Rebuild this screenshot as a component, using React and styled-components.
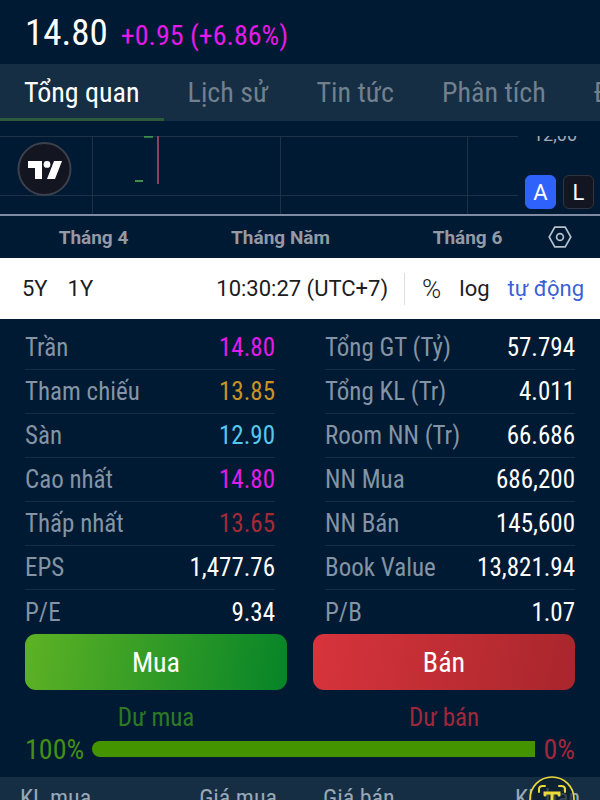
import React from 'react';
import styled, {createGlobalStyle} from 'styled-components';

const GlobalStyle = createGlobalStyle`
  * {
    box-sizing: border-box;
  }
  body {
    margin: 0;
    background-color: #001a33;
    font-family: 'Roboto Condensed', 'Liberation Sans Narrow', Roboto, sans-serif;
    overflow: hidden;
  }
  button {
    font-family: inherit;
    border: none;
    background: none;
    padding: 0;
    cursor: pointer;
  }
`;

const Page = styled.main`
  width: 100%;
  height: 100vh;
  overflow: hidden;
  color: #ffffff;
`;

const PriceHeader = styled.header`
  display: flex;
  align-items: baseline;
  gap: 13px;
  height: 64px;
  padding: 11px 25px 0;
  line-height: 44px;
  white-space: nowrap;
`;

const Price = styled.span`
  font-size: 37px;
`;

const Change = styled.span`
  font-size: 28px;
  color: #e31be8;
`;

const Tabs = styled.nav`
  display: flex;
  height: 57px;
  overflow: hidden;
  background-color: #152e44;
`;

const Tab = styled.button`
  flex: none;
  padding: 3px 24px 0;
  font-size: 28px;
  line-height: 50px;
  white-space: nowrap;
  color: ${props => props.$active ? '#ffffff' : '#72808d'};
  border-bottom: 3px solid ${props => props.$active ? '#2c5a3c' : 'transparent'};
`;

const Chart = styled.section`
  position: relative;
  display: grid;
  grid-template-columns: 1fr 82px;
  height: 95px;
  padding-top: 15px;
  border-bottom: 2px solid #7e8ba3;
`;

const Plot = styled.svg`
  display: block;
  width: 100%;
  height: 78px;
`;

const PriceAxis = styled.div`
  display: flex;
  flex-direction: column;
  justify-content: space-between;
  height: 78px;
  padding: 0 6px 5px 7px;
  overflow: hidden;
  font-family: Roboto, sans-serif;
`;

const AxisPrice = styled.span`
  height: 8px;
  padding-left: 8px;
  display: flex;
  align-items: flex-end;
  font-size: 18px;
  line-height: 18px;
  color: #a5abb5;
`;

const ScaleButtons = styled.div`
  display: flex;
  justify-content: space-between;
`;

const ScaleButton = styled.button`
  width: 31px;
  height: 34px;
  border: 1px solid ${props => props.$active ? '#2f62fb' : '#32353f'};
  border-radius: 6px;
  background-color: ${props => props.$active ? '#2f62fb' : '#131520'};
  color: #ffffff;
  font-size: 22px;
`;

const LogoBadge = styled.svg`
  position: absolute;
  left: 17px;
  top: 21px;
  width: 55px;
  height: 55px;
`;

const TimeAxis = styled.div`
  display: grid;
  grid-template-columns: repeat(3, 1fr) 39px;
  align-items: center;
  height: 42px;
  font-family: Roboto, sans-serif;
  font-size: 19px;
  font-weight: 700;
  color: #9499a3;
  text-align: center;
`;

const SettingsButton = styled.button`
  display: flex;
  justify-self: end;
  margin-right: 28px;
`;

const Toolbar = styled.div`
  display: flex;
  align-items: center;
  height: 61px;
  padding: 0 16px 0 22px;
  background-color: #ffffff;
  white-space: nowrap;
`;

const ToolButton = styled.button`
  font-family: Roboto, sans-serif;
  font-size: ${props => props.$symbol ? '26px' : '22px'};
  font-weight: ${props => props.$symbol ? 300 : 400};
  line-height: 32px;
  color: ${props => props.$active ? '#3c5fd6' : '#1c1c1e'};
`;

const Ranges = styled.div`
  display: flex;
  flex: 1;
  gap: 20px;
`;

const ScaleTools = styled.div`
  display: flex;
  align-items: center;
  gap: 18px;
  margin-left: 16px;
  padding-left: 17px;
  border-left: 1px solid #dcdee3;
`;

const Stats = styled.section`
  display: grid;
  grid-template-columns: 1fr 1fr;
  gap: 50px;
  padding: 7px 25px 0;
`;

const StatList = styled.dl`
  margin: 0;
`;

const StatRow = styled.div`
  display: flex;
  align-items: center;
  justify-content: space-between;
  height: 44px;
  font-size: 25px;
  border-bottom: 1px solid #122d45;
  &:last-child{
    border-bottom: none;
  }
`;

const StatLabel = styled.dt`
  color: #8494a5;
`;

const StatValue = styled.dd`
  margin: 0;
  color: ${props => props.$color || '#ffffff'};
`;

const Orders = styled.section`
  display: grid;
  grid-template-columns: 1fr 1fr;
  column-gap: 26px;
  padding: 0 25px;
`;

const OrderButton = styled.button`
  height: 56px;
  border-radius: 11px;
  font-size: 28px;
  color: #ffffff;
  background: ${props => props.$sell
    ? 'linear-gradient(100deg, #d8343c, #a8262c)'
    : 'linear-gradient(100deg, #5eb224, #068428)'};
`;

const OrderCaption = styled.p`
  margin: 13px 0 0;
  font-size: 25px;
  line-height: 30px;
  text-align: center;
  color: ${props => props.$sell ? '#a0283c' : '#2c7a22'};
`;

const Balance = styled.div`
  display: flex;
  align-items: center;
  gap: 8px;
  height: 32px;
  padding: 0 25px;
  font-size: 28px;
`;

const Percent = styled.span`
  color: ${props => props.$sell ? '#a0283c' : '#448f14'};
`;

const BalanceBar = styled.div`
  flex: 1;
  height: 16px;
  border-radius: 8px 0 0 8px;
  background-color: #449400;
`;

const OrderBook = styled.table`
  width: 100%;
  height: 42px;
  margin-top: 12px;
  border-spacing: 0;
  table-layout: fixed;
  background-color: #152e44;
`;

const BookHead = styled.th`
  padding: ${props => props.$inner ? '0 23px' : '0 20px'};
  font-size: 24px;
  font-weight: 400;
  text-align: ${props => props.$right ? 'right' : 'left'};
  color: #9aa7b4;
`;

const ScanButton = styled.button`
  position: absolute;
  right: 24px;
  top: 775px;
  width: 48px;
  height: 48px;
`;

const tabs = ['Tổng quan', 'Lịch sử', 'Tin tức', 'Phân tích', 'Định giá'];

const priceStats = [
  {label: 'Trần', value: '14.80', color: '#e31be8'},
  {label: 'Tham chiếu', value: '13.85', color: '#c99324'},
  {label: 'Sàn', value: '12.90', color: '#56c8ee'},
  {label: 'Cao nhất', value: '14.80', color: '#e31be8'},
  {label: 'Thấp nhất', value: '13.65', color: '#a52a38'},
  {label: 'EPS', value: '1,477.76'},
  {label: 'P/E', value: '9.34'},
];

const volumeStats = [
  {label: 'Tổng GT (Tỷ)', value: '57.794'},
  {label: 'Tổng KL (Tr)', value: '4.011'},
  {label: 'Room NN (Tr)', value: '66.686'},
  {label: 'NN Mua', value: '686,200'},
  {label: 'NN Bán', value: '145,600'},
  {label: 'Book Value', value: '13,821.94'},
  {label: 'P/B', value: '1.07'},
];

function StatColumn({items}) {
  return (
    <StatList>
      {items.map(item => (
        <StatRow key={item.label}>
          <StatLabel>{item.label}</StatLabel>
          <StatValue $color={item.color}>{item.value}</StatValue>
        </StatRow>
      ))}
    </StatList>
  )
}

function PriceChart() {
  return (
    <Chart>
      <Plot viewBox="0 0 518 78" preserveAspectRatio="none">
        <path d="M0 .5H518M0 59.5H518M92.5 0V78M280.5 0V78M467.5 0V78" stroke="#1d3246" fill="none" />
        <path d="M144 .7H153M135 45H143" stroke="#3f8f4c" strokeWidth="2" />
        <path d="M158 0V48" stroke="#8f3f62" strokeWidth="2" />
      </Plot>
      <PriceAxis>
        <AxisPrice>12,00</AxisPrice>
        <ScaleButtons>
          <ScaleButton $active>A</ScaleButton>
          <ScaleButton>L</ScaleButton>
        </ScaleButtons>
      </PriceAxis>
      <LogoBadge viewBox="0 0 55 55" role="img" aria-label="TradingView">
        <circle cx="27.5" cy="27" r="26" fill="#131520" stroke="#3c404c" strokeWidth="2" />
        <path d="M11 19H25V37H18V26H11Z" fill="#ffffff" />
        <circle cx="30" cy="22.4" r="3.4" fill="#ffffff" />
        <path d="M37 19H45L38 37H30Z" fill="#ffffff" />
      </LogoBadge>
    </Chart>
  )
}

export default function App() {
  return (
    <Page>
      <GlobalStyle />
      <PriceHeader>
        <Price>14.80</Price>
        <Change>+0.95 (+6.86%)</Change>
      </PriceHeader>
      <Tabs>
        {tabs.map((tab, i) => <Tab key={tab} $active={i === 0}>{tab}</Tab>)}
      </Tabs>

      <PriceChart />
      <TimeAxis>
        <span>Tháng 4</span>
        <span>Tháng Năm</span>
        <span>Tháng 6</span>
        <SettingsButton aria-label="Cài đặt">
          <svg width="24" height="22" viewBox="0 0 24 22" fill="none" stroke="#b4c0cc" strokeWidth="1.7">
            <path d="M6.8 1.2H17.2L22.8 11L17.2 20.8H6.8L1.2 11Z" />
            <circle cx="12" cy="11" r="3.4" />
          </svg>
        </SettingsButton>
      </TimeAxis>
      <Toolbar>
        <Ranges>
          <ToolButton>5Y</ToolButton>
          <ToolButton>1Y</ToolButton>
        </Ranges>
        <ToolButton>10:30:27 (UTC+7)</ToolButton>
        <ScaleTools>
          <ToolButton $symbol>%</ToolButton>
          <ToolButton>log</ToolButton>
          <ToolButton $active>tự động</ToolButton>
        </ScaleTools>
      </Toolbar>

      <Stats>
        <StatColumn items={priceStats} />
        <StatColumn items={volumeStats} />
      </Stats>

      <Orders>
        <OrderButton>Mua</OrderButton>
        <OrderButton $sell>Bán</OrderButton>
        <OrderCaption>Dư mua</OrderCaption>
        <OrderCaption $sell>Dư bán</OrderCaption>
      </Orders>
      <Balance>
        <Percent>100%</Percent>
        <BalanceBar />
        <Percent $sell>0%</Percent>
      </Balance>

      <OrderBook>
        <thead>
          <tr>
            <BookHead>KL mua</BookHead>
            <BookHead $inner $right>Giá mua</BookHead>
            <BookHead $inner>Giá bán</BookHead>
            <BookHead $right>KL bán</BookHead>
          </tr>
        </thead>
      </OrderBook>
      <ScanButton aria-label="Quét văn bản">
        <svg width="48" height="48" viewBox="0 0 48 48" fill="none" stroke="#ecd93a" strokeLinecap="round">
          <circle cx="24" cy="24" r="22" fill="#0c1c28" fillOpacity="0.7" strokeWidth="1.7" />
          <path d="M11 17V14Q11 11 15 11H17M31 11H33Q37 11 37 14V17M11 31V34Q11 37 15 37H17M31 37H33Q37 37 37 34V31" strokeWidth="2" />
          <path d="M17 20V18H31V20M24 18V31M21 31H27" strokeWidth="3" />
        </svg>
      </ScanButton>
    </Page>
  )
}
